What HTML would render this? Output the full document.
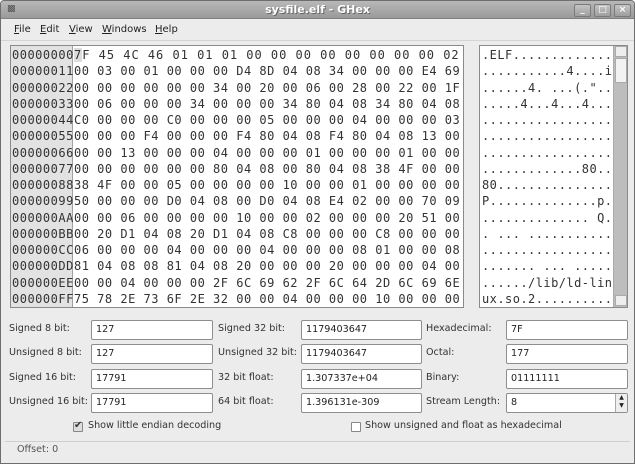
<!DOCTYPE html>
<html><head><meta charset="utf-8"><style>
*{margin:0;padding:0;box-sizing:border-box}
body{width:635px;height:464px;overflow:hidden;background:#fff;font-family:"DejaVu Sans","Liberation Sans",sans-serif;font-size:10px;color:#222;position:relative}
.win{position:absolute;left:0;top:0;width:635px;height:464px;background:#ececec;border:1px solid #6e6e6e;border-radius:4px 4px 0 0}
.title{position:absolute;left:0;top:0;width:633px;height:18px;background:linear-gradient(#b8b8b8,#9a9a9a);border-bottom:1px solid #808080;border-radius:3px 3px 0 0}
.title .t{position:absolute;left:0;right:0;top:2px;text-align:center;color:#fff;font-weight:bold;font-size:11px;text-shadow:1px 1px 0 #666}
.btn{position:absolute;top:3px;width:17px;height:13px;border:1px solid #7a7a7a;background:linear-gradient(#c4c4c4,#9e9e9e);border-radius:2px;color:#fff;font-size:9px;text-align:center;line-height:11px;font-weight:bold}
.menu{position:absolute;left:0;top:19px;width:633px;height:21px;border-bottom:1px solid #d4d4d4}
.menu span{position:absolute;top:4px;font-size:10px}
.u{text-decoration:underline}
.hexbox{position:absolute;left:9px;top:44px;width:454px;height:263px;border:1px solid #8a8a8a;background:#fff;overflow:hidden}
.off{position:absolute;left:0;top:0;width:62px;height:261px;background:#e2e2e2;border-right:1px solid #a0a0a0}
.mono{font-family:"DejaVu Sans Mono","Liberation Mono",monospace;font-size:12px;line-height:16.27px;white-space:pre;color:#333}
.ascbox{position:absolute;left:478px;top:44px;width:149px;height:263px;border:1px solid #8a8a8a;background:#fff;overflow:hidden}
.sb{position:absolute;right:0;top:0;width:14px;height:261px;background:#bdbdbd;border-left:1px solid #aaa}
.thumb{position:absolute;left:1px;top:12px;width:12px;height:25px;background:#f2f2f2;border:1px solid #aaa}
.lbl{position:absolute;font-size:9.6px;color:#333}
.ent{position:absolute;height:20px;border:1px solid #8e8e8e;border-radius:2px;background:#fff;font-size:9.6px;padding:3px 0 0 4px;color:#222}
.cb{position:absolute;width:10px;height:10px;border:1px solid #888;background:#fff;border-radius:1px}
</style></head><body><div class="win">
<div class="title"><span style="position:absolute;left:6px;top:3px;font-size:9px;color:#555">&#9641;</span><div class="t">sysfile.elf - GHex</div>
<div class="btn" style="left:573px">_</div><div class="btn" style="left:593px">&#9633;</div><div class="btn" style="left:613px">&#215;</div></div>
<div class="menu"><span style="left:13px"><span class="u" style="position:static">F</span>ile</span><span style="left:39px"><span class="u" style="position:static">E</span>dit</span><span style="left:68px"><span class="u" style="position:static">V</span>iew</span><span style="left:101px"><span class="u" style="position:static">W</span>indows</span><span style="left:154px"><span class="u" style="position:static">H</span>elp</span></div>
<div class="hexbox"><div class="off"><div class="mono" style="position:absolute;left:1px;top:1px;letter-spacing:0.5px">00000000
00000011
00000022
00000033
00000044
00000055
00000066
00000077
00000088
00000099
000000AA
000000BB
000000CC
000000DD
000000EE
000000FF</div></div>
<div class="mono" style="position:absolute;left:63px;top:1px;letter-spacing:0.5px"><span style="letter-spacing:0.98px"><span style="background:#ddd">7</span>F 45 4C 46 01 01 01 00 00 00 00 00 00 00 00 02</span>
00 03 00 01 00 00 00 D4 8D 04 08 34 00 00 00 E4 69
00 00 00 00 00 00 34 00 20 00 06 00 28 00 22 00 1F
00 06 00 00 00 34 00 00 00 34 80 04 08 34 80 04 08
C0 00 00 00 C0 00 00 00 05 00 00 00 04 00 00 00 03
00 00 00 F4 00 00 00 F4 80 04 08 F4 80 04 08 13 00
00 00 13 00 00 00 04 00 00 00 01 00 00 00 01 00 00
00 00 00 00 00 00 80 04 08 00 80 04 08 38 4F 00 00
38 4F 00 00 05 00 00 00 00 10 00 00 01 00 00 00 00
50 00 00 00 D0 04 08 00 D0 04 08 E4 02 00 00 70 09
00 00 06 00 00 00 00 10 00 00 02 00 00 00 20 51 00
00 20 D1 04 08 20 D1 04 08 C8 00 00 00 C8 00 00 00
06 00 00 00 04 00 00 00 04 00 00 00 08 01 00 00 08
81 04 08 08 81 04 08 20 00 00 00 20 00 00 00 04 00
00 00 04 00 00 00 2F 6C 69 62 2F 6C 64 2D 6C 69 6E
75 78 2E 73 6F 2E 32 00 00 04 00 00 00 10 00 00 00</div></div>
<div class="ascbox"><div class="mono" style="position:absolute;left:2px;top:1px;letter-spacing:0.45px">.ELF.............
...........4....i
......4. ...(."..
.....4...4...4...
.................
.................
.................
.............80..
80...............
P..............p.
.............. Q.
. ... ...........
.................
....... ... .....
....../lib/ld-lin
ux.so.2..........</div>
<div class="sb"><div class="thumb" style="top:0;height:11px;background:#eee"></div><div class="thumb"></div><div class="thumb" style="top:249px;height:11px;background:#eee"></div></div></div>

<div class="lbl" style="left:8px;top:322px">Signed 8 bit:</div><div class="ent" style="left:90px;top:319px;width:122px">127</div>
<div class="lbl" style="left:8px;top:346px">Unsigned 8 bit:</div><div class="ent" style="left:90px;top:343px;width:122px">127</div>
<div class="lbl" style="left:8px;top:371px">Signed 16 bit:</div><div class="ent" style="left:90px;top:368px;width:122px">17791</div>
<div class="lbl" style="left:8px;top:395px">Unsigned 16 bit:</div><div class="ent" style="left:90px;top:392px;width:122px">17791</div>
<div class="lbl" style="left:217px;top:322px">Signed 32 bit:</div><div class="ent" style="left:300px;top:319px;width:121px">1179403647</div>
<div class="lbl" style="left:217px;top:346px">Unsigned 32 bit:</div><div class="ent" style="left:300px;top:343px;width:121px">1179403647</div>
<div class="lbl" style="left:217px;top:371px">32 bit float:</div><div class="ent" style="left:300px;top:368px;width:121px">1.307337e+04</div>
<div class="lbl" style="left:217px;top:395px">64 bit float:</div><div class="ent" style="left:300px;top:392px;width:121px">1.396131e-309</div>
<div class="lbl" style="left:425px;top:322px">Hexadecimal:</div><div class="ent" style="left:505px;top:319px;width:122px">7F</div>
<div class="lbl" style="left:425px;top:346px">Octal:</div><div class="ent" style="left:505px;top:343px;width:122px">177</div>
<div class="lbl" style="left:425px;top:371px">Binary:</div><div class="ent" style="left:505px;top:368px;width:122px">01111111</div>
<div class="lbl" style="left:425px;top:395px">Stream Length:</div><div class="ent" style="left:505px;top:392px;width:122px">8<div style="position:absolute;right:0;top:0;width:12px;height:18px;border-left:1px solid #aaa;background:#eee;font-size:6px;line-height:8px;text-align:center">&#9650;<br>&#9660;</div></div>
<div class="cb" style="left:72px;top:421px;background:#ddd"><span style="position:absolute;left:0;top:-3px;font-size:10px;color:#333">&#10004;</span></div><div class="lbl" style="left:87px;top:419px">Show little endian decoding</div>
<div class="cb" style="left:350px;top:421px"></div><div class="lbl" style="left:364px;top:419px">Show unsigned and float as hexadecimal</div>
<div style="position:absolute;left:4px;top:440px;width:625px;border-top:1px solid #cfcfcf"></div>
<div class="lbl" style="left:16px;top:443px;color:#555">Offset: 0</div>
</div></body></html>
